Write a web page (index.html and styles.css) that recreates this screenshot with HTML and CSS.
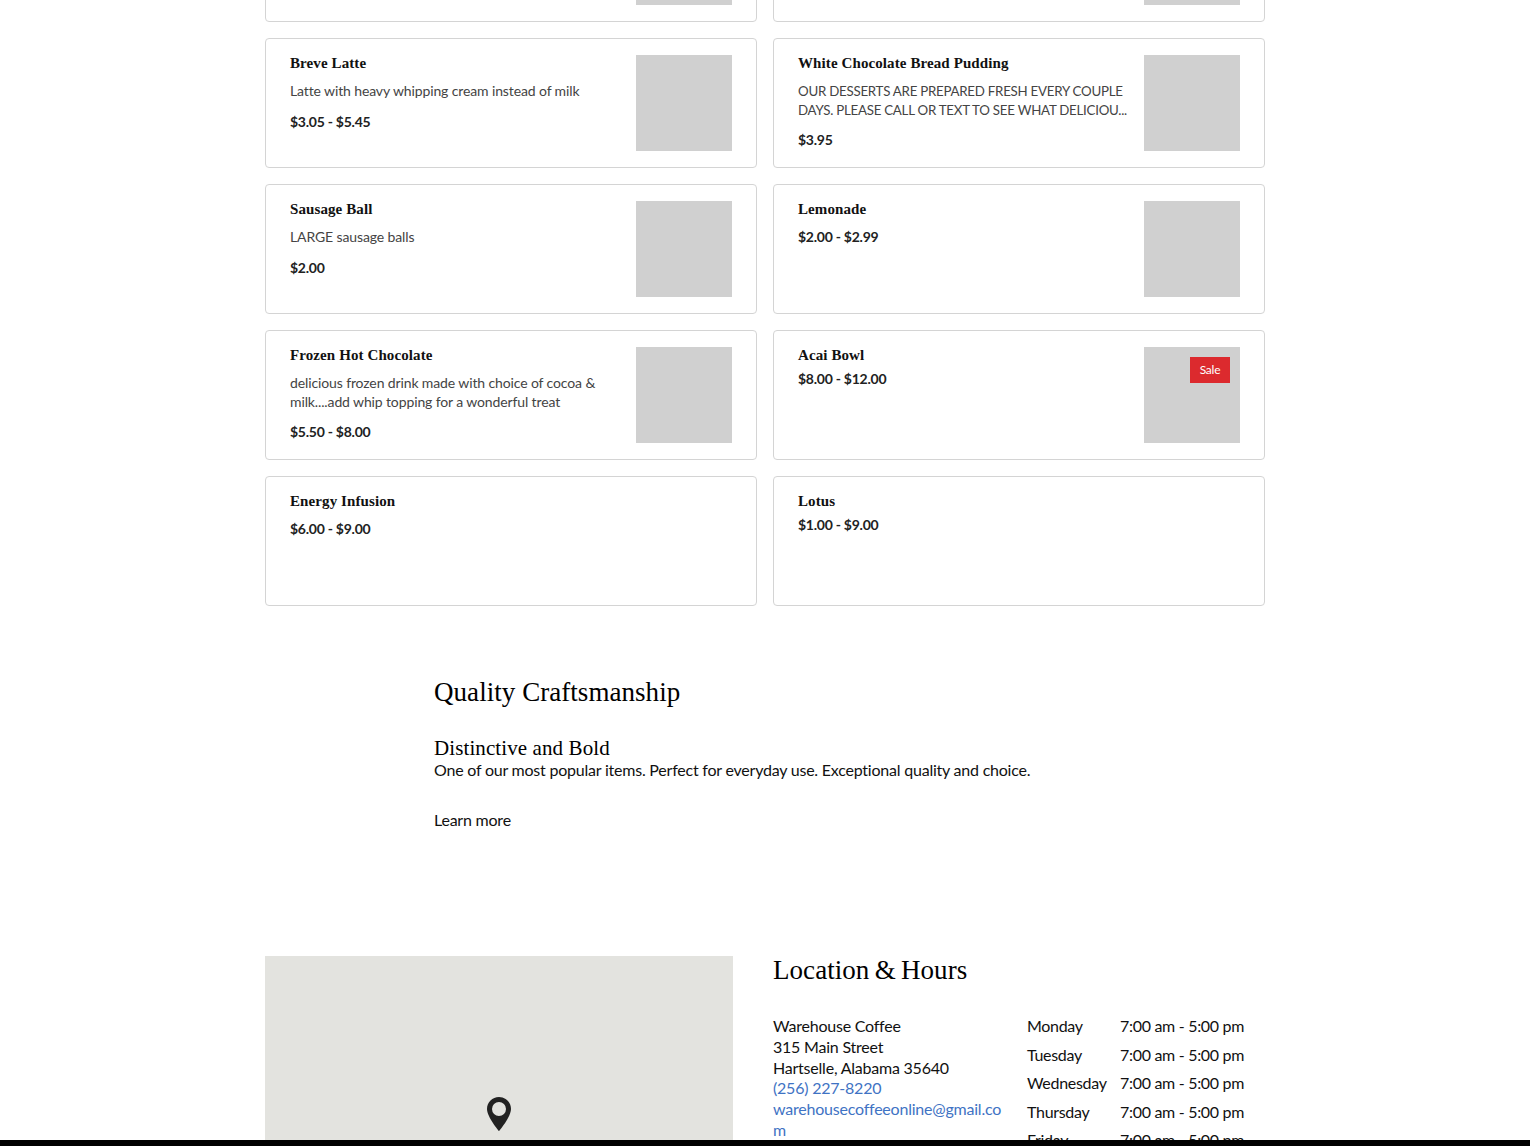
FILE: index.html
```html
<!DOCTYPE html>
<html lang="en">
<head>
    <meta charset="UTF-8">
    <meta name="viewport" content="width=device-width, initial-scale=1.0">
    <title>Warehouse Coffee</title>
    <link rel="stylesheet" href="styles.css">
</head>
<body>
    <div class="page">
        <div class="menu-grid">
            <div class="item"><div class="item-info"></div><div class="item-img"></div></div>
            <div class="item"><div class="item-info"></div><div class="item-img"></div></div>

            <div class="item">
                <div class="item-info">
                    <h3 class="item-name">Breve Latte</h3>
                    <p class="item-desc">Latte with heavy whipping cream instead of milk</p>
                    <p class="item-price">$3.05 - $5.45</p>
                </div>
                <div class="item-img"></div>
            </div>
            <div class="item">
                <div class="item-info">
                    <h3 class="item-name">White Chocolate Bread Pudding</h3>
                    <p class="item-desc caps">OUR DESSERTS ARE PREPARED FRESH EVERY COUPLE DAYS. PLEASE CALL OR TEXT TO SEE WHAT DELICIOU...</p>
                    <p class="item-price">$3.95</p>
                </div>
                <div class="item-img"></div>
            </div>

            <div class="item">
                <div class="item-info">
                    <h3 class="item-name">Sausage Ball</h3>
                    <p class="item-desc">LARGE sausage balls</p>
                    <p class="item-price">$2.00</p>
                </div>
                <div class="item-img"></div>
            </div>
            <div class="item">
                <div class="item-info">
                    <h3 class="item-name">Lemonade</h3>
                    <p class="item-price">$2.00 - $2.99</p>
                </div>
                <div class="item-img"></div>
            </div>

            <div class="item">
                <div class="item-info">
                    <h3 class="item-name">Frozen Hot Chocolate</h3>
                    <p class="item-desc">delicious frozen drink made with choice of cocoa &amp; milk....add whip topping for a wonderful treat</p>
                    <p class="item-price">$5.50 - $8.00</p>
                </div>
                <div class="item-img"></div>
            </div>
            <div class="item">
                <div class="item-info">
                    <h3 class="item-name">Acai Bowl</h3>
                    <p class="item-price sale-price">$8.00 - $12.00</p>
                </div>
                <div class="item-img">
                    <span class="sale-badge">Sale</span>
                </div>
            </div>

            <div class="item">
                <div class="item-info">
                    <h3 class="item-name">Energy Infusion</h3>
                    <p class="item-price">$6.00 - $9.00</p>
                </div>
            </div>
            <div class="item">
                <div class="item-info">
                    <h3 class="item-name">Lotus</h3>
                    <p class="item-price sale-price">$1.00 - $9.00</p>
                </div>
            </div>
        </div>

        <section class="feature">
            <h2 class="section-title">Quality Craftsmanship</h2>
            <h3 class="feature-title">Distinctive and Bold</h3>
            <p class="feature-text">One of our most popular items. Perfect for everyday use. Exceptional quality and choice.</p>
            <a class="feature-link" href="#">Learn more</a>
        </section>

        <section class="location">
            <div class="map">
                <svg class="map-pin" viewBox="0 0 24 34" width="26" height="34">
                    <path fill="#222" fill-rule="evenodd" d="M12 0C5.400 0 0 5.300 0 11.900 0 20 12 34 12 34s12-14 12-22.100C24 5.300 18.600 0 12 0zm0 5a7 7 0 1 1 0 14 7 7 0 0 1 0-14z"/>
                </svg>
            </div>
            <div class="location-info">
                <h2 class="section-title">Location &amp; Hours</h2>
                <div class="location-cols">
                    <div class="address">
                        <div>Warehouse Coffee</div>
                        <div>315 Main Street</div>
                        <div>Hartselle, Alabama 35640</div>
                        <a href="#">(256) 227-8220</a>
                        <a href="#">warehousecoffeeonline@gmail.com</a>
                    </div>
                    <div class="hours">
                        <div class="hours-row"><span>Monday</span><span>7:00 am - 5:00 pm</span></div>
                        <div class="hours-row"><span>Tuesday</span><span>7:00 am - 5:00 pm</span></div>
                        <div class="hours-row"><span>Wednesday</span><span>7:00 am - 5:00 pm</span></div>
                        <div class="hours-row"><span>Thursday</span><span>7:00 am - 5:00 pm</span></div>
                        <div class="hours-row"><span>Friday</span><span>7:00 am - 5:00 pm</span></div>
                    </div>
                </div>
            </div>
        </section>
    </div>

    <div class="bottom-bar"></div>
</body>
</html>
```

FILE: styles.css
```css
:root {
    --text-color: #111;
    --muted-color: #444;
    --border-color: #d4d4d4;
    --link-color: #3f73c4;
    --serif: "Liberation Serif", serif;
    --sans: Lato, "Noto Sans", sans-serif;
}

* {
    margin: 0;
    padding: 0;
    box-sizing: border-box;
}

html, body {
    height: 1146px;
    overflow: hidden;
}

body {
    background: #fff;
    color: var(--text-color);
    font-family: var(--sans);
    font-size: 16px;
    line-height: 20.8px;
    letter-spacing: -0.22px;
}

/* the shot was taken scrolled down, first row is cut by the window */
.page {
    width: 1000px;
    margin: -108px auto 0;
}

.menu-grid {
    display: grid;
    grid-template-columns: 1fr 1fr;
    gap: 16px;
}

.item {
    display: flex;
    gap: 16px;
    height: 130px;
    padding: 16px 24px;
    border: 1px solid var(--border-color);
    border-radius: 4px;
}

.item-info {
    flex: 1;
    min-width: 0;
}

.item-name {
    font-family: var(--serif);
    font-size: 15px;
    font-weight: bold;
    line-height: 16px;
    margin-bottom: 10px;
    letter-spacing: 0.1px;
}

.item-desc {
    font-size: 14px;
    line-height: 18.9px;
    letter-spacing: -0.12px;
    color: var(--muted-color);
    padding-top: 1px;
    margin-bottom: 10.6px;
}

.caps {
    font-size: 13.3px;
    letter-spacing: -0.25px;
}

.item-price {
    font-size: 14px;
    font-weight: bold;
    line-height: 19px;
    letter-spacing: -0.25px;
    color: #222;
}

.sale-price {
    margin-top: -4px;
}

.item-img {
    position: relative;
    flex: none;
    width: 96px;
    height: 96px;
    background: #d0d0d0;
}

.sale-badge {
    position: absolute;
    top: 10px;
    right: 10px;
    width: 40px;
    height: 26px;
    background: #dc2a2e;
    color: #fff;
    font-size: 12px;
    line-height: 26px;
    text-align: center;
}

.feature {
    padding: 67px 0 0 169px;
    height: 350px;
}

.section-title {
    font-family: var(--serif);
    font-size: 27px;
    font-weight: normal;
    line-height: 38px;
    letter-spacing: 0.05px;
    color: #000;
}

.feature-title {
    font-family: var(--serif);
    font-size: 21px;
    font-weight: normal;
    line-height: 26px;
    letter-spacing: 0.1px;
    margin-top: 24px;
    color: #000;
}

.feature-text {
    line-height: 20px;
    margin-top: -1px;
}

.feature-link {
    display: block;
    margin-top: 30px;
    color: var(--text-color);
    text-decoration: none;
}

.location {
    display: flex;
    gap: 40px;
}

.map {
    flex: none;
    display: flex;
    align-items: center;
    justify-content: center;
    width: 468px;
    height: 316px;
    background: #e3e3df;
}

.location-info {
    flex: 1;
    min-width: 0;
}

.location-info .section-title {
    line-height: 28px;
    word-spacing: -1.5px;
}

.location-cols {
    display: flex;
    gap: 20px;
    margin-top: 32px;
}

.address {
    flex: none;
    width: 234px;
}

.address a {
    display: block;
    color: var(--link-color);
    text-decoration: none;
    word-break: break-all;
}

.hours {
    flex: 1;
    letter-spacing: -0.3px;
}

.hours-row {
    display: grid;
    grid-template-columns: 93px 1fr;
    height: 28.6px;
}

.bottom-bar {
    position: fixed;
    left: 0;
    right: 0;
    bottom: 0;
    height: 6px;
    background: #000;
}
```
